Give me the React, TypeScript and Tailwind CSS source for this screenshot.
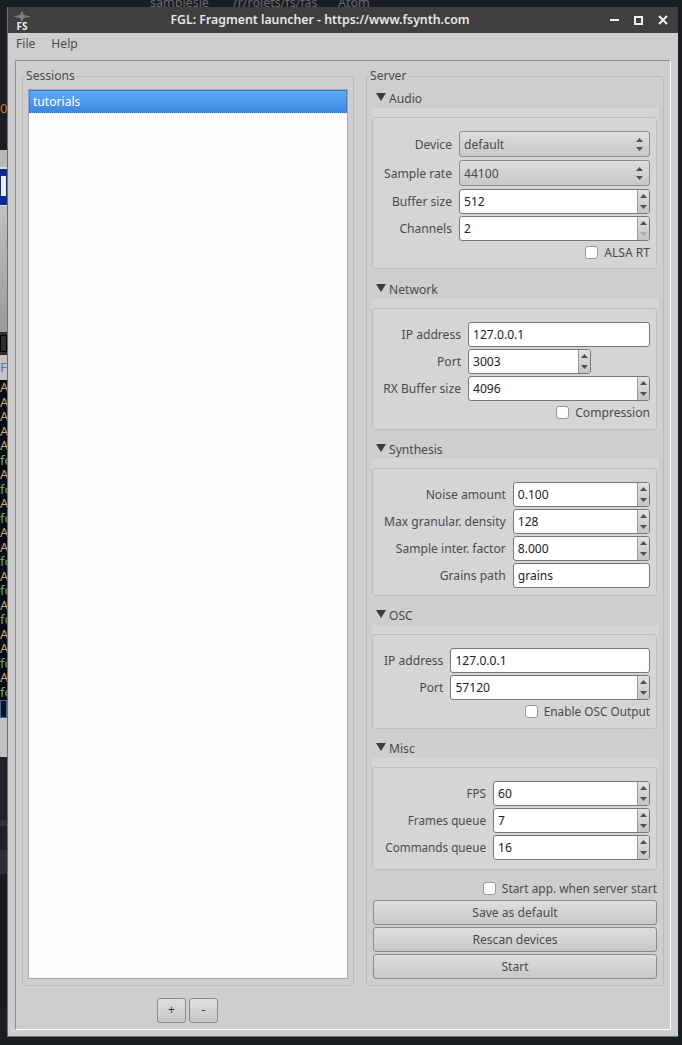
import { FC, ReactNode } from "react";

const FONT = "font-['Noto_Sans','Open_Sans',sans-serif]";

const Arrow: FC<{ down?: boolean; dim?: boolean }> = ({ down, dim }) => (
  <svg width="7" height="4" viewBox="0 0 7 4" className={dim ? "text-[#a8a8a8]" : "text-[#505050]"}>
    <path d={down ? "M0 0h7L3.5 4z" : "M3.5 0L7 4H0z"} fill="currentColor" />
  </svg>
);

const Combo: FC<{ value: string }> = ({ value }) => (
  <div className="flex h-[26px] items-center justify-between rounded-[3px] border border-[#8c8c8c] bg-gradient-to-b from-[#dedede] to-[#c8c8c8] pl-1 pr-[6px] text-[#4b4b4b]">
    <span className="pt-[2px]">{value}</span>
    <div className="flex flex-col gap-[5px]">
      <Arrow />
      <Arrow down />
    </div>
  </div>
);

const Spin: FC<{ value: string; className?: string; minDim?: boolean }> = ({ value, className = "", minDim }) => (
  <div className={`flex h-[25px] overflow-hidden rounded-[3px] border border-[#777] bg-white ${className}`}>
    <span className="flex-1 pl-1 leading-[24px] text-[#222]">{value}</span>
    <div className="flex w-[12px] flex-col border-l border-[#999] bg-gradient-to-b from-[#e2e2e2] to-[#c4c4c4]">
      <div className="flex h-[11px] items-center justify-center">
        <Arrow />
      </div>
      <div className="flex h-[12px] items-center justify-center">
        <Arrow down dim={minDim} />
      </div>
    </div>
  </div>
);

const Input: FC<{ value: string }> = ({ value }) => (
  <div className="h-[25px] rounded-[3px] border border-[#777] bg-white pl-1 leading-[24px] text-[#222]">{value}</div>
);

const Check: FC<{ label: string; className?: string }> = ({ label, className = "" }) => (
  <div className={`flex h-[22px] items-center justify-end gap-[6px] ${className}`}>
    <div className="h-[13px] w-[13px] rounded-[3px] border border-[#999] bg-white" />
    <span className="pt-[2px]">{label}</span>
  </div>
);

const Label: FC<{ children: ReactNode; className?: string }> = ({ children, className = "pt-[2px]" }) => (
  <div className={`flex items-center justify-end whitespace-nowrap ${className}`}>{children}</div>
);

const Section: FC<{ title: string; gapTop: string; boxClass: string; children: ReactNode }> = ({ title, gapTop, boxClass, children }) => (
  <section className={gapTop}>
    <div className="flex h-[20px] items-center gap-[3px] pl-[9px] text-[#4b4b4b]">
      <svg width="10" height="8" viewBox="0 0 10 8" className="mt-[-2px]">
        <path d="M0 0h10L5 8z" fill="#3c3c3c" />
      </svg>
      <span className="pt-[3px]">{title}</span>
    </div>
    <div className="mx-[5px] bg-[#d5d5d5] pt-[9px]">
      <div className={`mr-px rounded-[3px] border border-[#bcbcbc] pl-[11px] pr-[6px] ${boxClass}`}>{children}</div>
    </div>
  </section>
);

const Wide: FC<{ label: string }> = ({ label }) => (
  <button
    type="button"
    className="h-[25px] w-full rounded-[3px] border border-[#8c8c8c] bg-gradient-to-b from-[#dedede] to-[#c8c8c8] pt-[2px] text-[#4b4b4b]"
  >
    {label}
  </button>
);

const Small: FC<{ label: string }> = ({ label }) => (
  <button
    type="button"
    className="h-[25px] w-[29px] rounded-[3px] border border-[#8c8c8c] bg-gradient-to-b from-[#dedede] to-[#c8c8c8] text-[#333]"
  >
    {label}
  </button>
);

const Backdrop: FC = () => {
  const rows = ["Al", "Al", "Al", "Al", "Al", "fo", "Al", "fo", "Al", "fo", "Al", "Al", "fo", "Al", "fo", "Al", "fo", "Al", "Al", "fo", "Al", "fo"];
  return (
    <div className="absolute inset-y-0 left-0 flex w-[7px] flex-col overflow-hidden bg-[#1a1d22] text-[13px]">
      <div className="h-[96px]" />
      <div className="h-[24px] leading-[24px] text-[#c9793a]">0</div>
      <div className="h-[30px]" />
      <div className="h-[17px] bg-[#b8b8b8]" />
      <div className="h-[2px] bg-[#e0e0e0]" />
      <div className="flex h-[36px] bg-[#0a2a9a] py-[7px]">
        <div className="ml-px h-[20px] w-[5px] bg-[#e8eef8]" />
      </div>
      <div className="h-px bg-[#dcdcdc]" />
      <div className="h-[126px] bg-gradient-to-b from-[#c0c0c0] to-[#9a9a9a]" />
      <div className="h-[23px] bg-[#2e2e2e] py-[3px]">
        <div className="h-[17px] border border-black" />
      </div>
      <div className="h-[25px] bg-[#c4c4c4] leading-[24px] text-[#4a7ab0]">F</div>
      <div className="h-[320px] bg-[#070a14] leading-[14.5px]">
        {rows.map((r, i) => (
          <div key={i} className={r === "fo" ? "text-[#7fa05a]" : "text-[#c9a87a]"}>
            {r}
          </div>
        ))}
      </div>
      <div className="h-[18px] border border-[#2a6fb5] bg-[#07101c]" />
      <div className="h-[39px] bg-[#c0c0c0]" />
      <div className="h-[63px] bg-[#20232b]" />
      <div className="h-[6px] bg-[#2e323c]" />
      <div className="h-[24px] bg-[#1e2128]" />
      <div className="h-[24px] bg-[#2a2e38]" />
      <div className="h-[130px] bg-[#191b20]" />
    </div>
  );
};

export default function App() {
  return (
    <div className={`relative h-[1045px] w-[682px] overflow-hidden bg-[#1a1d22] text-[12.1px] ${FONT}`}>
      <Backdrop />
      <div className="flex h-[7px] overflow-hidden whitespace-nowrap pl-[150px] text-[12.5px] leading-[6px] text-[#6a6a6a]">
        <span className="w-[83px]">samplesie</span>
        <span className="w-[105px]">/r/rojets/fs/fas</span>
        <span>Atom</span>
      </div>

      <div className="relative ml-[7px] flex h-[1030px] w-[671px] flex-col border-b border-l border-[#6e6e6e] bg-[#cecece]">
        <header className="relative flex h-[26px] shrink-0 items-center justify-center bg-[#3f3f3f] text-[12.3px] font-semibold text-[#e6e6e6]">
          <div className="absolute left-[2px] top-0 flex h-[26px] w-[24px] flex-col items-center">
            <svg width="18" height="11" viewBox="0 0 18 11" className="mt-[4px]">
              <path d="M9 0l2 4L18 5.5l-7 1.5L9 11 7 7 0 5.5 7 4z" fill="#7d7d7d" />
            </svg>
            <span className="mt-[-1px] text-[10px] font-bold leading-[10px] text-[#eee]">FS</span>
          </div>
          <span className="pr-[46px]">FGL: Fragment launcher - https://www.fsynth.com</span>
          <div className="absolute right-[10px] top-0 flex h-[26px] items-center gap-[15px]">
            <div className="h-[2px] w-[9px] bg-[#f0f0f0]" />
            <div className="h-[9px] w-[9px] border-2 border-[#f0f0f0]" />
            <svg width="10" height="10" viewBox="0 0 10 10">
              <path d="M1 1l8 8M9 1l-8 8" stroke="#f0f0f0" strokeWidth="2" />
            </svg>
          </div>
        </header>

        <nav className="flex h-[22px] shrink-0 items-center gap-[16px] pl-[8px] text-[#4b4b4b]">
          <span>File</span>
          <span>Help</span>
        </nav>

        <main className="mx-[7px] mt-[5px] flex h-[970px] flex-col rounded-[2px] border border-[#8a8a8a] border-b-white border-r-white pl-[6px] pr-[6px]">
          <div className="flex pt-[15px]">
            <div className="relative h-[910px] w-[332px] rounded-[3px] border border-[#bcbcbc] pl-[5px] pr-[5px] pt-[12px]">
              <span className="absolute left-[2px] top-[-10px] bg-[#cecece] px-px leading-[18px] text-[#4b4b4b]">Sessions</span>
              <div className="h-[890px] border border-[#a8a8a8] bg-[#fdfdfd]">
                <div className="h-[23px] border border-dotted border-[#2a6cc0] bg-gradient-to-b from-[#5eaaf8] to-[#3d88e0] pl-[3px] leading-[21px] text-white">tutorials</div>
              </div>
            </div>

            <div className="relative ml-[12px] h-[910px] w-[298px] rounded-[3px] border border-[#bcbcbc] pt-[11px] text-[#4b4b4b]">
              <span className="absolute left-[2px] top-[-10px] bg-[#cecece] px-px leading-[18px]">Server</span>

              <Section title="Audio" gapTop="" boxClass="pt-[13px] h-[152px]">
                <div className="grid grid-cols-[auto_1fr] gap-x-[7px]">
                  <Label className="h-[29px] pb-[1px]">Device</Label>
                  <Combo value="default" />
                  <Label className="h-[29px] pb-[1px]">Sample rate</Label>
                  <Combo value="44100" />
                  <Label className="h-[27px]">Buffer size</Label>
                  <Spin value="512" />
                  <Label className="h-[25px] pt-[2px]">Channels</Label>
                  <Spin value="2" minDim />
                </div>
                <Check label="ALSA RT" />
              </Section>

              <Section title="Network" gapTop="mt-[10px]" boxClass="pt-[13px] h-[122px]">
                <div className="grid grid-cols-[77px_1fr] gap-x-[7px] gap-y-[2px]">
                  <Label>IP address</Label>
                  <Input value="127.0.0.1" />
                  <Label>Port</Label>
                  <Spin value="3003" className="w-[123px]" />
                  <Label>RX Buffer size</Label>
                  <Spin value="4096" />
                </div>
                <Check label="Compression" />
              </Section>

              <Section title="Synthesis" gapTop="mt-[9px]" boxClass="pt-[13px] h-[128px]">
                <div className="grid grid-cols-[auto_1fr] gap-x-[7px] gap-y-[2px]">
                  <Label>Noise amount</Label>
                  <Spin value="0.100" />
                  <Label>Max granular. density</Label>
                  <Spin value="128" />
                  <Label>Sample inter. factor</Label>
                  <Spin value="8.000" />
                  <Label>Grains path</Label>
                  <Input value="grains" />
                </div>
              </Section>

              <Section title="OSC" gapTop="mt-[9px]" boxClass="pt-[13px] h-[95px]">
                <div className="grid grid-cols-[auto_1fr] gap-x-[7px] gap-y-[2px]">
                  <Label>IP address</Label>
                  <Input value="127.0.0.1" />
                  <Label>Port</Label>
                  <Spin value="57120" />
                </div>
                <Check label="Enable OSC Output" className="text-[11.8px]" />
              </Section>

              <Section title="Misc" gapTop="mt-[9px]" boxClass="pt-[13px] h-[103px]">
                <div className="grid grid-cols-[102px_1fr] gap-x-[7px] gap-y-[2px]">
                  <Label className="text-[11.7px]">FPS</Label>
                  <Spin value="60" />
                  <Label className="text-[11.7px]">Frames queue</Label>
                  <Spin value="7" />
                  <Label className="text-[11.7px]">Commands queue</Label>
                  <Spin value="16" />
                </div>
              </Section>

              <div className="pl-[6px] pr-[6px]">
                <Check label="Start app. when server start" className="mt-[7px] text-[11.9px]" />
                <div className="mt-[1px] flex flex-col gap-[2px]">
                  <Wide label="Save as default" />
                  <Wide label="Rescan devices" />
                  <Wide label="Start" />
                </div>
              </div>
            </div>
          </div>

          <div className="mt-[12px] flex gap-[3px] pl-[135px]">
            <Small label="+" />
            <Small label="-" />
          </div>
        </main>
      </div>
    </div>
  );
}
